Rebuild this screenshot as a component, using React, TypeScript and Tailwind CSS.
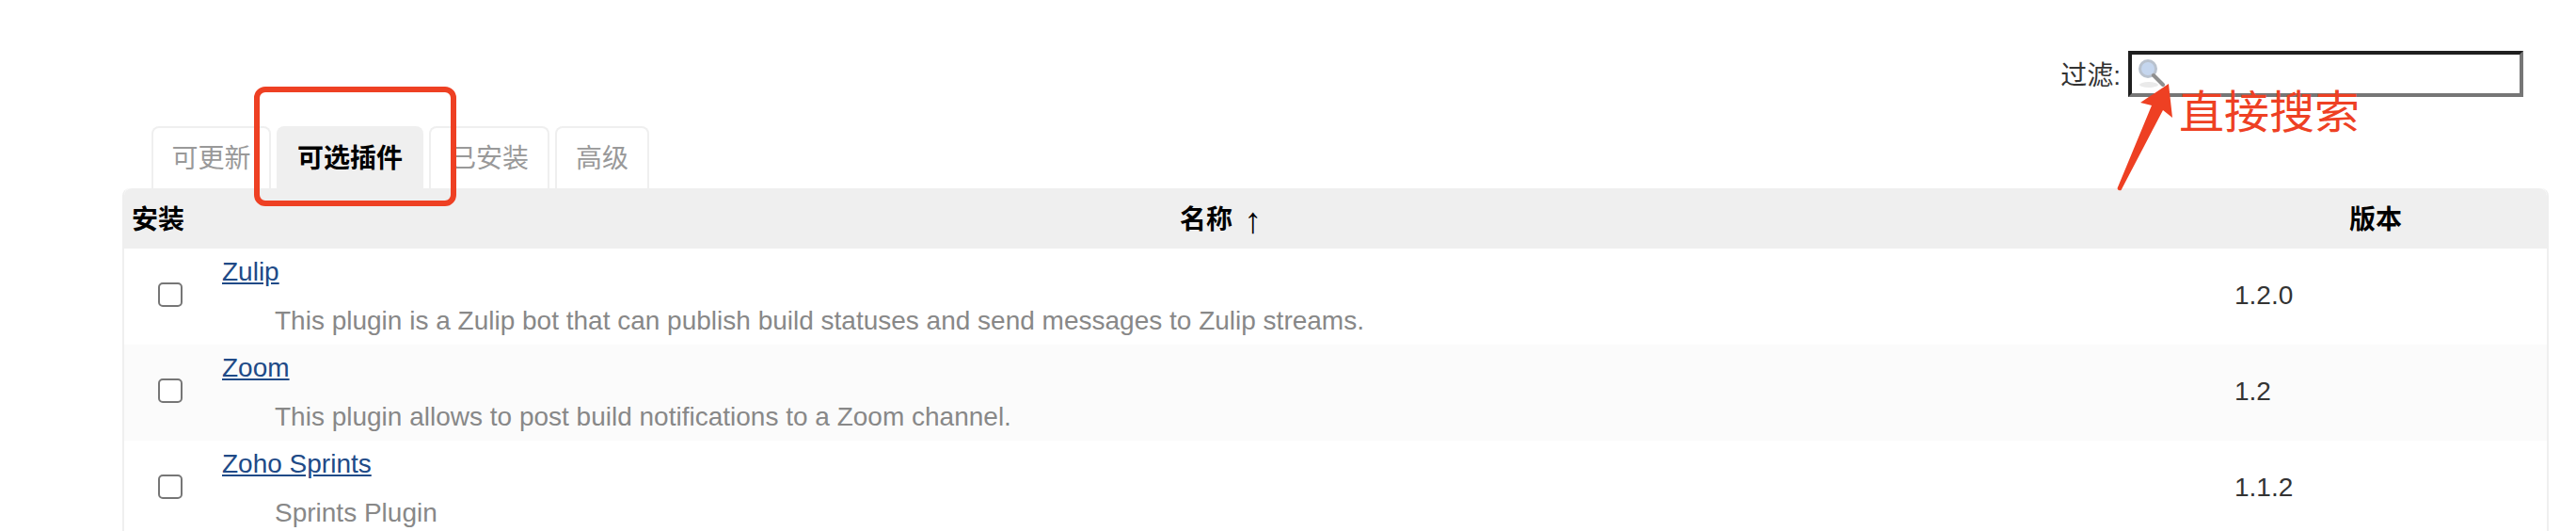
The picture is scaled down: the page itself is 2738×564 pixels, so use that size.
const rows = [
  { name: "Zulip", desc: "This plugin is a Zulip bot that can publish build statuses and send messages to Zulip streams.", version: "1.2.0" },
  { name: "Zoom", desc: "This plugin allows to post build notifications to a Zoom channel.", version: "1.2" },
  { name: "Zoho Sprints", desc: "Sprints Plugin", version: "1.1.2" },
];

const tabs = [
  { label: "可更新", width: "w-[127px]" },
  { label: "可选插件", width: "w-[156px]" },
  { label: "已安装", width: "w-[128px]" },
  { label: "高级", width: "w-[100px]" },
];

const fontStack = "font-['Liberation_Sans','Noto_Sans_CJK_SC',sans-serif]";

function SearchIcon() {
  return (
    <svg width="30" height="32" viewBox="0 0 30 32" className="absolute left-[6px] top-[5px] blur-[0.6px]">
      <ellipse cx="12" cy="27" rx="10" ry="3" fill="#eaeaea" />
      <circle cx="11" cy="10" r="8.5" fill="#c5d6ee" stroke="#b9c2ce" strokeWidth="3" />
      <path d="M17 17 L27 27" stroke="#8f8f8f" strokeWidth="4" strokeLinecap="round" />
    </svg>
  );
}

export default function App() {
  return (
    <div className={`relative h-[564px] w-[2738px] overflow-hidden bg-white text-[28px] text-[#333] ${fontStack}`}>
      <div className="flex h-[134px] flex-col pr-[56px] pt-[54px]">
        <div className="flex items-center justify-end gap-[8px]">
          <span className="pt-[4px] text-[#333]">过滤:</span>
          <div className="relative h-[49px] w-[420px] border-[4px] border-t-[#1f1f1f] border-r-[#767676] border-b-[#767676] border-l-[#1f1f1f] bg-white">
            <SearchIcon />
          </div>
        </div>
      </div>

      <div className="flex h-[66px] gap-[6px] pl-[161px]">
        {tabs.map((tab, i) => (
          <div
            key={tab.label}
            className={
              i === 1
                ? `flex items-center justify-center rounded-t-[8px] bg-[#efefef] pt-[4px] font-bold text-black ${tab.width}`
                : `flex items-center justify-center rounded-t-[8px] border-[2px] border-b-0 border-[#efefef] pt-[2px] text-[#999] ${tab.width}`
            }
          >
            {tab.label}
          </div>
        ))}
      </div>

      <div className="ml-[130px] mr-[29px] rounded-t-[8px] border-x-[2px] border-[#efefef]">
        <div className="grid h-[64px] grid-cols-[76px_1fr_364px] items-center rounded-t-[8px] bg-[#efefef] pt-[3px] font-bold text-black">
          <div className="pl-[8px]">安装</div>
          <div className="flex items-center justify-center gap-[12px] pl-[44px]">
            名称
            <span className="text-[38px] leading-[42px] font-normal">↑</span>
          </div>
          <div className="text-center">版本</div>
        </div>
        {rows.map((row, i) => (
          <div key={row.name} className={`grid h-[102px] grid-cols-[104px_1fr_364px] ${i === 1 ? "bg-[#fbfbfb]" : "bg-white"}`}>
            <div className="flex items-center justify-center pb-[4px] pr-[6px]">
              <div className="h-[26px] w-[26px] rounded-[5px] border-[2px] border-[#767676] bg-white" />
            </div>
            <div className="pt-[4px]">
              <a href="#" className="text-[#204a87] underline">{row.name}</a>
              <div className="mt-[10px] pl-[56px] text-[#888]">{row.desc}</div>
            </div>
            <div className="flex items-center pb-[3px] pl-[32px] text-[#333]">{row.version}</div>
          </div>
        ))}
      </div>

      <div className="absolute left-[270px] top-[92px] h-[127px] w-[215px] rounded-[12px] border-[6px] border-[#ee4023]" />

      <svg width="100" height="130" viewBox="0 0 100 130" className="absolute left-[2240px] top-[84px]">
        <path
          d="M65 5 L35 25 L47 28 L10.5 116 Q11 119 14.5 118 L59 33 L69 41 Z"
          fill="#ee4023"
        />
      </svg>
      <div className="absolute left-[2316px] top-[90px] text-[48px] leading-[60px] text-[#ee4023]">直接搜索</div>
    </div>
  );
}
